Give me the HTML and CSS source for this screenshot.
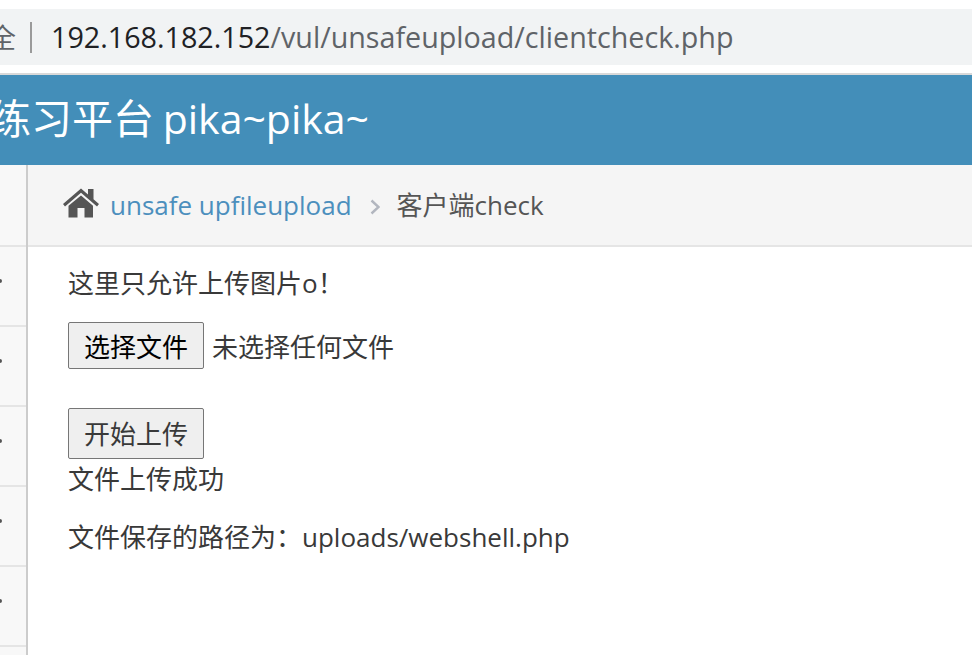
FILE: index.html
```html
<!DOCTYPE html>
<html lang="zh-CN">
<head>
<meta charset="utf-8">
<title>clientcheck</title>
<link rel="stylesheet" href="styles.css">
</head>
<body>
<div class="chrome">
  <div class="address">
    <span class="secure">全</span>
    <span class="divider"></span>
    <span class="url"><span class="host">192.168.182.152</span>/vul/unsafeupload/clientcheck.php</span>
  </div>
</div>
<header class="navbar"><span class="brand">练习平台 pika~pika~</span></header>
<div class="layout">
  <aside class="sidebar">
    <div class="side-item short"></div>
    <div class="side-item"><span class="dot"></span></div>
    <div class="side-item"><span class="dot"></span></div>
    <div class="side-item"><span class="dot"></span></div>
    <div class="side-item"><span class="dot"></span></div>
    <div class="side-item"><span class="dot"></span></div>
  </aside>
  <main class="main">
    <nav class="crumbs">
      <svg class="home" viewBox="0 0 36 30" aria-hidden="true"><path fill="#555" d="M18 0.5 L25 6.6 V1 H30.5 V11.3 L36 16 L34 18.4 L18 4.8 L2 18.4 L0 16 Z M18 7.6 L30 17.8 V29.5 H21.5 V20 H14.5 V29.5 H5.5 V17.8 Z"/></svg>
      <a class="crumb-link">unsafe upfileupload</a>
      <svg class="chev" viewBox="0 0 10 16" aria-hidden="true"><path fill="none" stroke="#b2b6bf" stroke-width="2.4" d="M1.5 1.5 L8.5 8 L1.5 14.5"/></svg>
      <span class="crumb-current">客户端check</span>
    </nav>
    <section class="content">
      <p class="intro">这里只允许上传图片o！</p>
      <div class="file-row"><button class="btn choose" type="button">选择文件</button><span class="no-file">未选择任何文件</span></div>
      <button class="btn upload" type="button">开始上传</button>
      <p class="ok">文件上传成功</p>
      <p class="path">文件保存的路径为：uploads/webshell.php</p>
    </section>
  </main>
</div>
</body>
</html>
```
FILE: styles.css
```css
* { box-sizing: border-box; }
html, body { margin: 0; height: 100%; }
body {
  width: 972px;
  height: 655px;
  overflow: hidden;
  background: #fff;
  color: #393939;
  font-family: "Open Sans", "Noto Sans CJK SC", sans-serif;
  font-size: 26px;
  display: flex;
  flex-direction: column;
}
.chrome {
  height: 75px;
  padding: 9px 0 7px;
  border-bottom: 2px solid #d9d9d9;
  flex: none;
}
.address {
  height: 56px;
  background: #f1f3f4;
  display: flex;
  align-items: center;
  overflow: hidden;
  font-size: 28.7px;
  color: #5f6368;
}
.secure { margin-left: -11px; font-size: 27px; margin-top: -2px; }
.divider { width: 2px; height: 31px; background: #9a9a9a; margin: 0 19px 0 14px; flex: none; }
.url { white-space: nowrap; margin-top: -2px; }
.host { color: #202124; }
.navbar {
  height: 90px;
  background: #438eb9;
  display: flex;
  align-items: center;
  overflow: hidden;
  flex: none;
  color: #fff;
  font-size: 41px;
}
.brand { margin-left: -10px; margin-top: -9px; white-space: nowrap; word-spacing: -2px; }
.layout { flex: 1; display: flex; min-height: 0; }
.sidebar {
  width: 28px;
  flex: none;
  background: #f8f8f8;
  border-right: 2px solid #ccc;
}
.side-item {
  height: 80px;
  border-bottom: 2px solid #e5e5e5;
  position: relative;
}
.side-item.short { height: 82px; }
.dot { position: absolute; left: -2px; top: 32px; width: 4px; height: 4px; border-radius: 50%; background: #555; }
.main { flex: 1; min-width: 0; }
.crumbs {
  height: 82px;
  background: #f5f5f5;
  border-bottom: 2px solid #e5e5e5;
  display: flex;
  align-items: center;
  padding-left: 35px;
}
.home { width: 36px; height: 30px; margin-right: 11px; margin-top: -4px; }
.crumb-link { color: #4c8fbd; }
.chev { width: 10px; height: 16px; margin: 4px 16px 0 18px; }
.crumb-current { color: #555; margin: -2px 0 0 1px; }
.content { padding: 16px 0 0 40px; }
.content p { margin: 0; }
.intro { line-height: 40px; }
.file-row { display: flex; align-items: center; margin-top: 19px; }
.btn {
  font: inherit;
  width: 136px;
  padding: 0;
  background: #efefef;
  border: 1px solid #767676;
  border-radius: 2px;
}
.choose { height: 47px; color: #000; }
.no-file { margin-left: 8px; }
.upload { display: block; height: 51px; margin-top: 39px; padding-bottom: 2px; color: #393939; }
.ok { line-height: 40px; }
.content .path { line-height: 40px; margin-top: 18px; }
```
